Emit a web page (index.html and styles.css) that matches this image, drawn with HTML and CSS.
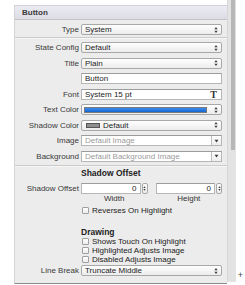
FILE: index.html
```html
<!DOCTYPE html>
<html>
<head>
<meta charset="utf-8">
<link rel="stylesheet" href="styles.css">
</head>
<body>
<div class="screen">
  <div class="panel">
    <div class="header">Button</div>

    <div class="row first">
      <span class="label">Type</span>
      <div class="popup"><span class="val">System</span><svg class="updown" viewBox="0 0 4 8"><polygon points="0.4,3.2 2,1 3.6,3.2"/><polygon points="0.4,4.8 2,7 3.6,4.8"/></svg></div>
    </div>

    <div class="sep top-sep"></div>

    <div class="fields">
      <div class="row">
        <span class="label">State Config</span>
        <div class="popup"><span class="val">Default</span><svg class="updown" viewBox="0 0 4 8"><polygon points="0.4,3.2 2,1 3.6,3.2"/><polygon points="0.4,4.8 2,7 3.6,4.8"/></svg></div>
      </div>
      <div class="row">
        <span class="label">Title</span>
        <div class="popup"><span class="val">Plain</span><svg class="updown" viewBox="0 0 4 8"><polygon points="0.4,3.2 2,1 3.6,3.2"/><polygon points="0.4,4.8 2,7 3.6,4.8"/></svg></div>
      </div>
      <div class="row">
        <span class="label"></span>
        <div class="field"><span class="val">Button</span></div>
      </div>
      <div class="row">
        <span class="label">Font</span>
        <div class="field"><span class="val">System 15 pt</span><span class="tglyph">T</span></div>
      </div>
      <div class="row">
        <span class="label">Text Color</span>
        <div class="popup well"><span class="bar"></span><svg class="updown" viewBox="0 0 4 8"><polygon points="0.4,3.2 2,1 3.6,3.2"/><polygon points="0.4,4.8 2,7 3.6,4.8"/></svg></div>
      </div>
      <div class="row">
        <span class="label">Shadow Color</span>
        <div class="popup swatchpop"><span class="swatch"></span><span class="val grow">Default</span><svg class="updown" viewBox="0 0 4 8"><polygon points="0.4,3.2 2,1 3.6,3.2"/><polygon points="0.4,4.8 2,7 3.6,4.8"/></svg></div>
      </div>
      <div class="row">
        <span class="label">Image</span>
        <div class="combo"><span class="ph">Default Image</span><span class="btn"><svg class="down" viewBox="0 0 5 4"><polygon points="0.5,0.8 4.5,0.8 2.5,3.4"/></svg></span></div>
      </div>
      <div class="row">
        <span class="label">Background</span>
        <div class="combo"><span class="ph">Default Background Image</span><span class="btn"><svg class="down" viewBox="0 0 5 4"><polygon points="0.5,0.8 4.5,0.8 2.5,3.4"/></svg></span></div>
      </div>
    </div>

    <div class="sep mid-sep"></div>

    <div class="heading">Shadow Offset</div>

    <div class="row offset">
      <span class="label">Shadow Offset</span>
      <div class="pair">
        <div class="num"><div class="field right"><span class="val">0</span></div><div class="stepper"><svg class="updown" viewBox="0 0 4 8"><polygon points="0.4,3.2 2,1 3.6,3.2"/><polygon points="0.4,4.8 2,7 3.6,4.8"/></svg></div></div>
        <div class="num"><div class="field right"><span class="val">0</span></div><div class="stepper"><svg class="updown" viewBox="0 0 4 8"><polygon points="0.4,3.2 2,1 3.6,3.2"/><polygon points="0.4,4.8 2,7 3.6,4.8"/></svg></div></div>
      </div>
    </div>

    <div class="row captions">
      <span class="label"></span>
      <div class="pair"><span class="cap">Width</span><span class="cap">Height</span></div>
    </div>

    <div class="check reverses"><span class="box"></span><span>Reverses On Highlight</span></div>

    <div class="heading drawing">Drawing</div>

    <div class="check"><span class="box"></span><span>Shows Touch On Highlight</span></div>
    <div class="check"><span class="box"></span><span>Highlighted Adjusts Image</span></div>
    <div class="check"><span class="box"></span><span>Disabled Adjusts Image</span></div>

    <div class="row linebreak">
      <span class="label">Line Break</span>
      <div class="popup"><span class="val">Truncate Middle</span><svg class="updown" viewBox="0 0 4 8"><polygon points="0.4,3.2 2,1 3.6,3.2"/><polygon points="0.4,4.8 2,7 3.6,4.8"/></svg></div>
    </div>
  </div>

  <div class="scroll"><div class="knob"></div></div>

  <div class="gutter"><span class="resize">+</span></div>
</div>
</body>
</html>
```

FILE: styles.css
```css
* { box-sizing: border-box; }

html, body {
  margin: 0;
  padding: 0;
  background: #ffffff;
}

body {
  width: 245px;
  height: 285px;
  overflow: hidden;
  font-family: "Liberation Sans", Arial, sans-serif;
  font-size: 8px;
  color: #2b2b2b;
}

.screen {
  display: flex;
  height: 285px;
}

.panel {
  margin-left: 14px;
  margin-top: 5px;
  width: 213px;
  align-self: flex-start;
  background: #ececec;
  border-left: 1px solid #d4d4d4;
  border-bottom: 1px solid #8c8c8c;
  padding-right: 5px;
  padding-bottom: 7px;
  display: flex;
  flex-direction: column;
}

.header {
  height: 15px;
  margin-right: -5px;
  padding-left: 7px;
  line-height: 14px;
  font-weight: bold;
  color: #3a3a3a;
  background: linear-gradient(#ebebf2, #dcdce6);
  border-top: 1px solid #d0d0d8;
  border-bottom: 1px solid #c2c2c8;
}

.row {
  display: grid;
  grid-template-columns: 64px 141px;
  column-gap: 2px;
  height: 11px;
  align-items: center;
}

.row.first { margin-top: 4px; }

.label {
  text-align: right;
  line-height: 11px;
  color: #3a3a3a;
  white-space: nowrap;
}

.val {
  line-height: 9px;
  color: #1c1c1c;
  white-space: nowrap;
}

.grow { flex: 1; }

.popup {
  height: 11px;
  border: 1px solid #a8a8a8;
  border-radius: 2px;
  background: linear-gradient(#fefefe, #ececec);
  display: flex;
  align-items: center;
  justify-content: space-between;
  padding: 0 3px 0 3px;
}

.updown {
  width: 4px;
  height: 8px;
  fill: #3a3a3a;
  flex: none;
}

.field {
  height: 11px;
  background: #ffffff;
  border: 1px solid #b6b6b6;
  border-top-color: #9c9c9c;
  display: flex;
  align-items: center;
  justify-content: space-between;
  padding: 0 3px;
}

.field.right { justify-content: flex-end; }

.tglyph {
  font-family: "Liberation Serif", "Times New Roman", serif;
  font-weight: bold;
  font-size: 10px;
  line-height: 9px;
  color: #333;
  margin-right: 1px;
}

.sep {
  height: 2px;
  margin-right: -5px;
  border-top: 1px solid #cbcbcb;
  border-bottom: 1px solid #f6f6f6;
}

.top-sep { margin-top: 2px; }

.fields {
  margin-top: 3px;
  display: flex;
  flex-direction: column;
  gap: 4.5px;
}

.popup.well {
  padding-left: 2px;
}

.bar {
  height: 6px;
  width: 123px;
  background: linear-gradient(#3d8ef0, #1565cf);
  border: 1px solid #7a7a7a;
}

.popup.swatchpop {
  justify-content: flex-start;
  padding-left: 4px;
}

.swatch {
  width: 14px;
  height: 5px;
  background: #8e8e8e;
  border: 1px solid #555555;
  margin-right: 3px;
  flex: none;
}

.combo {
  height: 11px;
  background: #ffffff;
  border: 1px solid #b6b6b6;
  border-top-color: #9c9c9c;
  display: flex;
  align-items: stretch;
}

.ph {
  flex: 1;
  padding-left: 3px;
  line-height: 9px;
  color: #9b9b9b;
  white-space: nowrap;
  overflow: hidden;
}

.btn {
  width: 10px;
  border-left: 1px solid #bdbdbd;
  background: linear-gradient(#ffffff, #ededed);
  display: flex;
  align-items: center;
  justify-content: center;
}

.down {
  width: 5px;
  height: 4px;
  fill: #3a3a3a;
}

.mid-sep { margin-top: 3.5px; }

.heading {
  margin-left: 66px;
  height: 10px;
  line-height: 10px;
  font-weight: bold;
  font-size: 8.5px;
  color: #222;
  margin-top: 1px;
}

.row.offset { margin-top: 5px; }

.pair {
  display: grid;
  grid-template-columns: 1fr 1fr;
  column-gap: 8px;
}

.num {
  display: flex;
  gap: 1px;
}

.num .field { flex: 1; }

.stepper {
  width: 6px;
  height: 11px;
  border: 1px solid #a8a8a8;
  border-radius: 2px;
  background: linear-gradient(#fefefe, #ececec);
  display: flex;
  align-items: center;
  justify-content: center;
}

.stepper .updown { width: 3px; height: 7px; }

.row.captions { height: 9px; }

.cap {
  text-align: center;
  line-height: 9px;
  color: #333;
}

.check {
  margin-left: 67px;
  height: 9px;
  display: flex;
  align-items: center;
  gap: 3px;
  line-height: 9px;
  color: #222;
  white-space: nowrap;
}

.check.reverses { margin-top: 3px; }

.box {
  width: 7px;
  height: 7px;
  border: 1px solid #a0a0a0;
  border-radius: 1px;
  background: linear-gradient(#ffffff, #ececec);
  flex: none;
}

.heading.drawing { margin-top: 12px; }

.row.linebreak { margin-top: 1px; }

.scroll {
  width: 9px;
  height: 282px;
  background: #e3e3e3;
  border-left: 1px solid #d6d6d6;
  padding-left: 3px;
}

.knob {
  width: 4px;
  height: 150px;
  background: #b7b7b7;
}

.gutter {
  flex: 1;
  display: flex;
  flex-direction: column;
  justify-content: flex-end;
  align-items: center;
  padding-bottom: 5px;
}

.resize {
  font-size: 9px;
  line-height: 9px;
  color: #444;
}
```
